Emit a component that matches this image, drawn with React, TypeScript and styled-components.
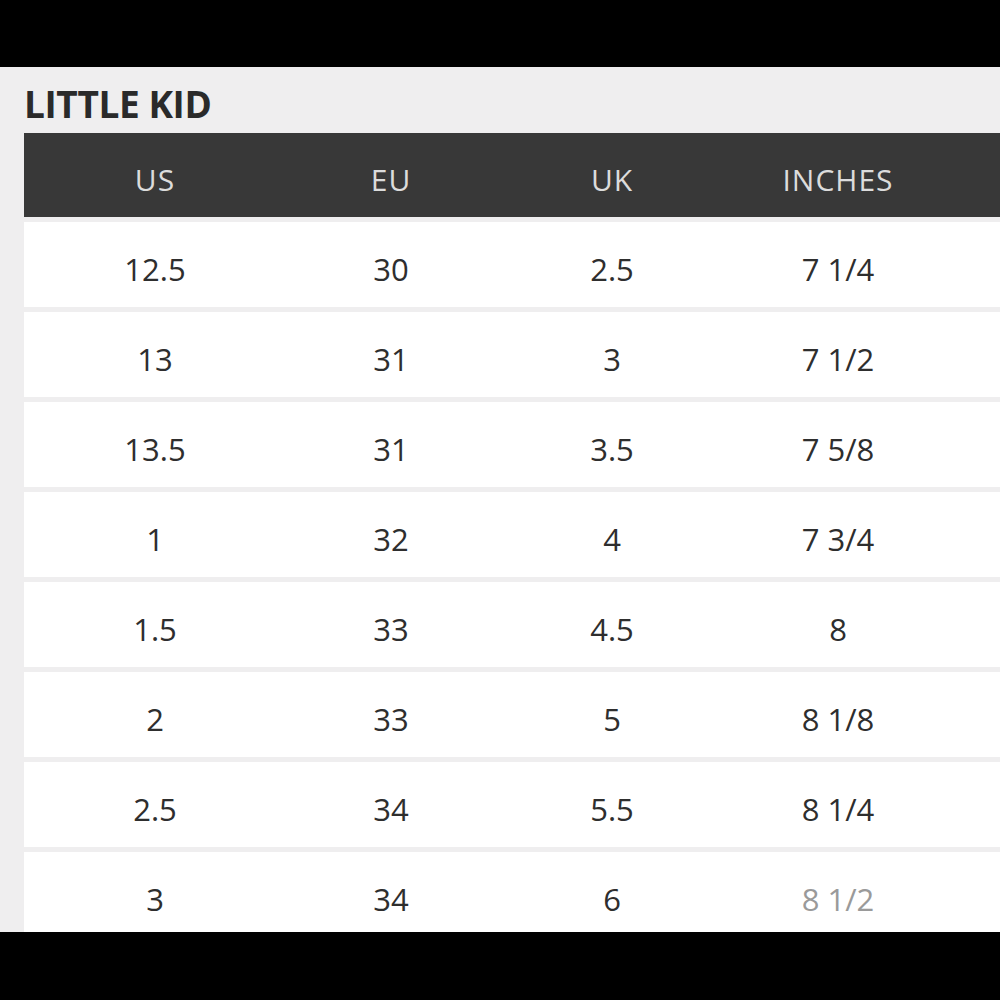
import React from "react";
import styled, { createGlobalStyle } from "styled-components";

const GlobalStyle = createGlobalStyle`
  html, body {
    margin: 0;
    padding: 0;
    background: #000;
  }
  body {
    font-family: "Open Sans", "Liberation Sans", sans-serif;
  }
`;

const Screen = styled.div`
  width: 1000px;
  height: 1000px;
  display: flex;
  flex-direction: column;
  background: #000;
  overflow: hidden;
`;

const BlackBar = styled.div<{ $h: number }>`
  height: ${(p) => p.$h}px;
  flex: 0 0 ${(p) => p.$h}px;
  background: #000;
`;

const Panel = styled.div`
  flex: 0 0 865px;
  height: 865px;
  background: #efeeef;
  padding: 18px 0 0 24px;
  box-sizing: border-box;
  overflow: hidden;
  display: flex;
  flex-direction: column;
`;

const Title = styled.h2`
  margin: 0 0 11px 0;
  font-family: "Open Sans", "Liberation Sans", sans-serif;
  font-weight: 700;
  font-size: 37px;
  line-height: 37px;
  letter-spacing: -0.4px;
  color: #2a2a2a;
`;

const Table = styled.div`
  display: flex;
  flex-direction: column;
  gap: 5px;
`;

const columns = "262px 210px 232px 220px 1fr";

const HeaderRow = styled.div`
  display: grid;
  grid-template-columns: ${columns};
  height: 84px;
  background: #383838;
  box-sizing: border-box;
  padding-top: 10px;
  align-items: center;
`;

const HeaderCell = styled.div`
  text-align: center;
  font-size: 30px;
  line-height: 30px;
  font-weight: 400;
  letter-spacing: 1px;
  color: #dcdcdc;
`;

const Row = styled.div`
  display: grid;
  grid-template-columns: ${columns};
  height: 85px;
  flex: 0 0 85px;
  background: #ffffff;
  box-sizing: border-box;
  padding-top: 9px;
  align-items: center;
`;

const Cell = styled.div<{ $faded?: boolean }>`
  text-align: center;
  font-size: 31px;
  line-height: 31px;
  font-weight: 400;
  color: ${(p) => (p.$faded ? "#9a9a9a" : "#2e2e2e")};
`;

const headers = ["US", "EU", "UK", "INCHES"];

const data: string[][] = [
  ["12.5", "30", "2.5", "7 1/4"],
  ["13", "31", "3", "7 1/2"],
  ["13.5", "31", "3.5", "7 5/8"],
  ["1", "32", "4", "7 3/4"],
  ["1.5", "33", "4.5", "8"],
  ["2", "33", "5", "8 1/8"],
  ["2.5", "34", "5.5", "8 1/4"],
  ["3", "34", "6", "8 1/2"],
];

export default function App() {
  return (
    <>
      <GlobalStyle />
      <Screen>
        <BlackBar $h={67} />
        <Panel>
          <Title>LITTLE KID</Title>
          <Table>
            <HeaderRow>
              {headers.map((h) => (
                <HeaderCell key={h}>{h}</HeaderCell>
              ))}
              <div />
            </HeaderRow>
            {data.map((row, ri) => (
              <Row key={ri}>
                {row.map((v, ci) => (
                  <Cell key={ci} $faded={ri === data.length - 1 && ci === 3}>
                    {v}
                  </Cell>
                ))}
                <div />
              </Row>
            ))}
          </Table>
        </Panel>
        <BlackBar $h={68} />
      </Screen>
    </>
  );
}
